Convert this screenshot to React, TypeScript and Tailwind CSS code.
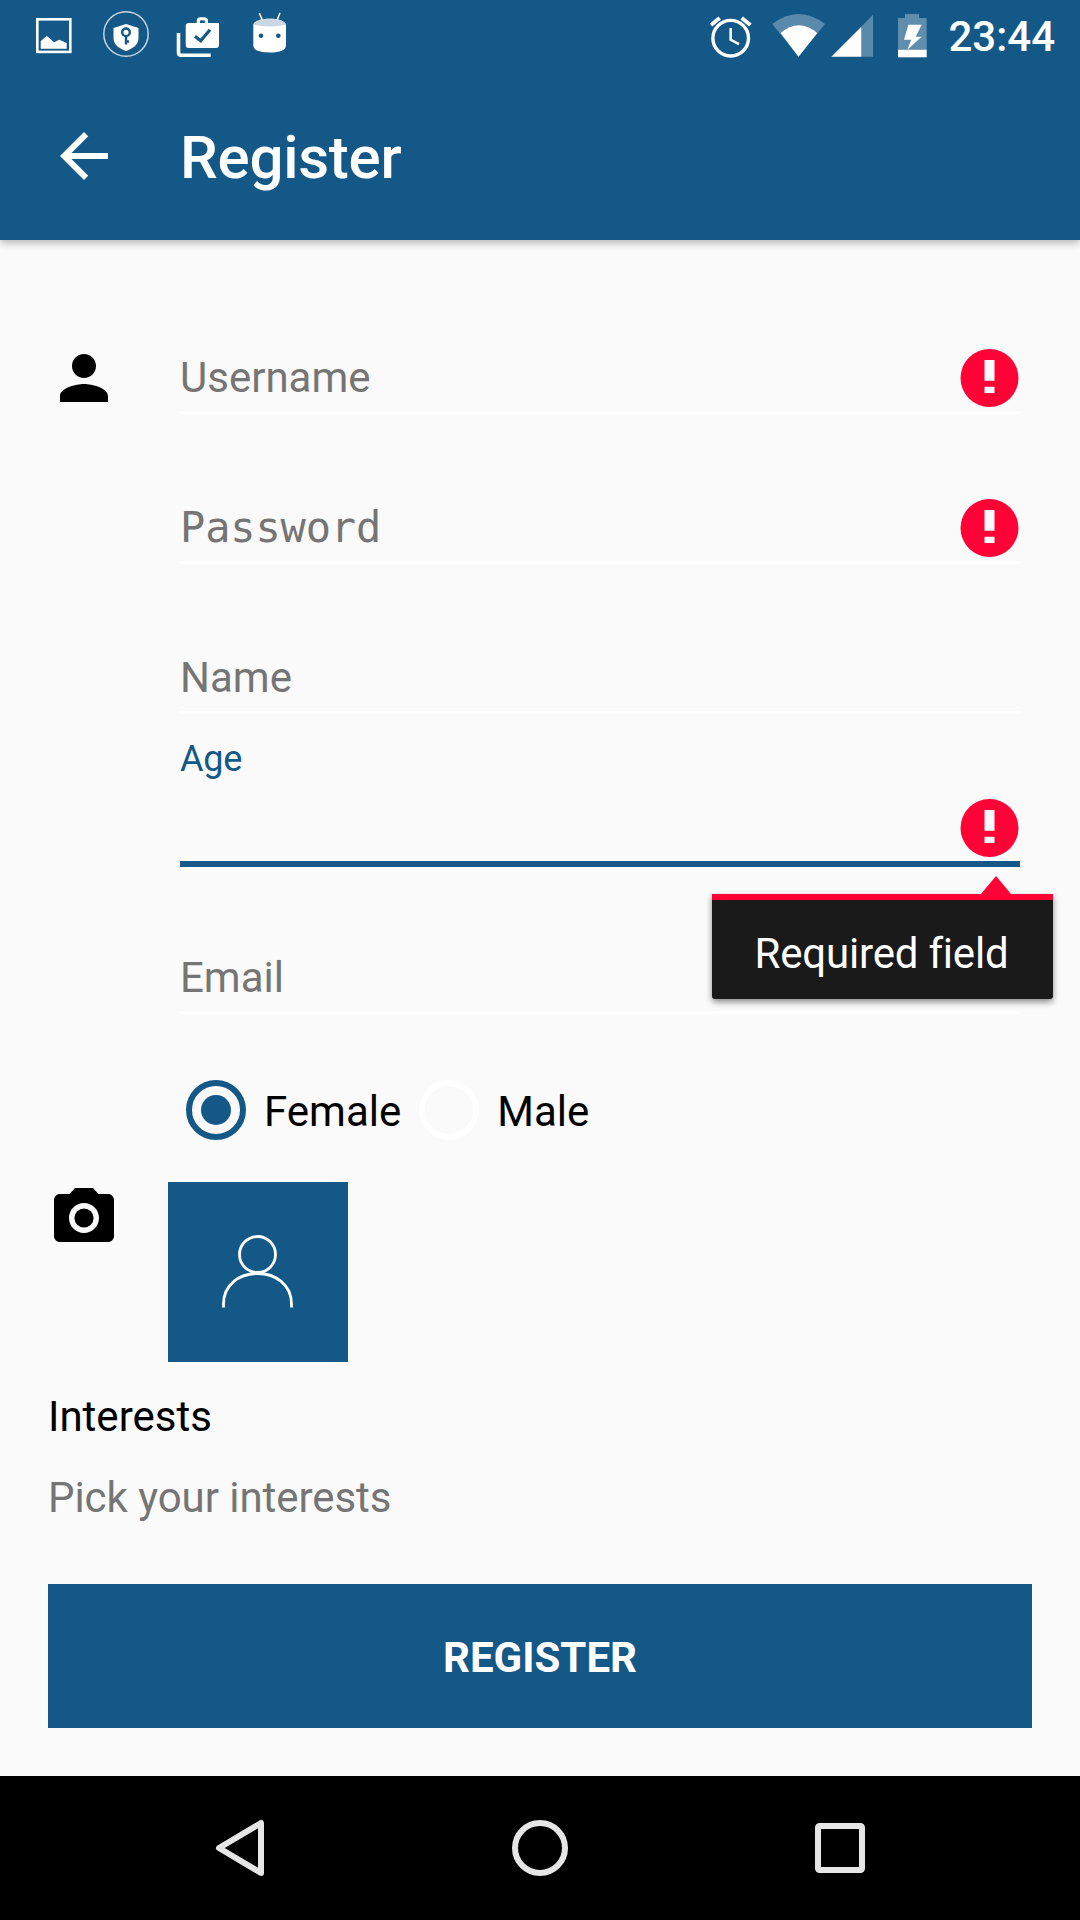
import React from "react";

const BLUE = "#145887";

function StatusLeft() {
  return (
    <svg width="260" height="72" viewBox="30 0 260 72" className="block">
      <rect x="37.3" y="19.3" width="33" height="32.6" fill="none" stroke="#fff" strokeWidth="2.6" />
      <path d="M40.7 48.7V41.3L46.7 35.7 54 42.3 59.3 39.7 66.7 43V48.7Z" fill="#fff" />
      <circle cx="126" cy="34" r="22.2" fill="none" stroke="#fff" strokeOpacity="0.75" strokeWidth="1.5" />
      <path d="M126 24 113.5 28V38C113.5 45 120 49 126 51 132 49 138.5 45 138.5 38V28Z" fill="#fff" />
      <circle cx="126" cy="32.3" r="3.8" fill="none" stroke={BLUE} strokeWidth="2.4" />
      <path d="M126 36V44.5M126 41.5H129" stroke={BLUE} strokeWidth="2.4" fill="none" />
      <path d="M178.5 33V52.5Q178.5 55.3 181.3 55.3H210.7" fill="none" stroke="#fff" strokeWidth="3.6" />
      <path d="M196.7 23V21Q196.7 17.3 200.4 17.3H204.3Q208 17.3 208 21V23H219V45Q219 48 216 48H188.7Q185.7 48 185.7 45V26Q185.7 23 188.7 23Z" fill="#fff" />
      <rect x="200" y="20.4" width="4.8" height="2.6" fill={BLUE} />
      <path d="M195 36.3 200.7 40.7 210 29.7" fill="none" stroke={BLUE} strokeWidth="3.2" />
      <path d="M259.3 13 262.7 21M280 13 276.7 21" stroke="#fff" strokeWidth="1.6" fill="none" />
      <path d="M253.3 25.5C253.3 20.5 262 18.7 269.7 18.7S286 20.5 286 25.5V45C286 50.5 280 52.5 269.7 52.5S253.3 50.5 253.3 45Z" fill="#fff" />
      <path d="M253.3 25.5C253.3 20.5 262 18.7 269.7 18.7S286 20.5 286 25.5C286 23.7 279 26.5 269.7 26.5S253.3 23.7 253.3 25.5Z" fill="#c9d8e3" />
      <circle cx="261" cy="35.7" r="2.3" fill={BLUE} />
      <circle cx="278.3" cy="35.7" r="2.3" fill={BLUE} />
    </svg>
  );
}

function StatusRight() {
  return (
    <svg width="225" height="72" viewBox="705 0 225 72" className="block">
      <circle cx="731.7" cy="38.2" r="17.8" fill="none" stroke="#fff" strokeWidth="3.4" />
      <path d="M712 25 720.7 18M751.4 25 742.7 18" stroke="#fff" strokeWidth="4" fill="none" />
      <path d="M731.7 28V39.8L740 44.2" stroke="#fff" strokeWidth="2.6" fill="none" />
      <path d="M799.5 56.7 773.3 24Q799.5 4 826 24Z" fill="#fff" fillOpacity="0.3" />
      <path d="M799.5 56.7 781.7 33Q799.5 17.6 818.3 33Z" fill="#fff" />
      <path d="M862.3 56.7V26.7L874 14.7V56.7Z" fill="#fff" fillOpacity="0.3" />
      <path d="M832.3 56.7 862.3 26.7V56.7Z" fill="#fff" />
      <path d="M906 18V14H920V18H927.7V49.7H899V18Z" fill="#fff" fillOpacity="0.32" />
      <rect x="899" y="49.7" width="28.7" height="7.6" fill="#fff" />
      <path d="M909.3 24.7H922.7L916.7 36.7H922.7L908.3 49.7 912.3 39.7H905Z" fill="#fff" />
    </svg>
  );
}

function ErrorIcon() {
  return (
    <svg width="72" height="72" viewBox="0 0 72 72" className="relative top-[3px] -mr-[6px] shrink-0">
      <path
        fill="#ff0336"
        fillRule="evenodd"
        d="M35.5 7a29 29 0 1 0 0 58a29 29 0 1 0 0-58ZM30.5 18H40.5V38.7H30.5ZM30.5 44.7H40.5V51H30.5Z"
      />
    </svg>
  );
}

function Field({
  label,
  mono,
  error,
  leading,
}: {
  label: string;
  mono?: boolean;
  error?: boolean;
  leading?: React.ReactNode;
}) {
  return (
    <div className="flex h-[150px] items-end pl-[48px] pr-[60px]">
      <div className="mr-[60px] w-[72px] shrink-0">{leading}</div>
      <div className="flex-1">
        <div className="flex h-[72px] items-center justify-between">
          <span
            className={
              mono
                ? "relative top-[3px] font-['DejaVu_Sans_Mono',monospace] text-[42px] leading-[72px] tracking-[-0.15px] text-[#757575]"
                : "relative top-[3px] text-[42px] leading-[72px] text-[#757575]"
            }
          >
            {label}
          </span>
          {error ? <ErrorIcon /> : null}
        </div>
        <div className="h-[3px] bg-white" />
      </div>
    </div>
  );
}

function AgeField() {
  return (
    <div className="flex h-[153px] items-end pl-[180px] pr-[60px]">
      <div className="relative flex-1">
        <div className="mb-[9px] text-[36px] leading-[42px] tracking-[-0.2px] text-[#145887]">Age</div>
        <div className="flex h-[72px] items-center justify-end">
          <ErrorIcon />
        </div>
        <div className="h-[6px] bg-[#145887]" />
        <div className="absolute right-[-33px] top-[156px] z-10 flex h-[105px] w-[341px] items-center justify-center rounded-b-[3px] border-t-[6px] border-[#ff0336] bg-[#1a1a1a] pt-[9px] shadow-[0_3px_6px_rgba(0,0,0,0.45)]">
          <svg width="30" height="18" viewBox="0 0 30 18" className="absolute left-[269px] top-[-24px]">
            <path d="M15 0 30 18H0Z" fill="#ff0336" />
          </svg>
          <span className="relative left-[-1px] text-[42px] leading-[50px] tracking-[-0.2px] text-white">Required field</span>
        </div>
      </div>
    </div>
  );
}

function Radio({ checked }: { checked?: boolean }) {
  return checked ? (
    <div className="flex h-[60px] w-[60px] items-center justify-center rounded-full border-[6px] border-[#145887]">
      <div className="h-[30px] w-[30px] rounded-full bg-[#145887]" />
    </div>
  ) : (
    <div className="h-[60px] w-[60px] rounded-full border-[6px] border-white" />
  );
}

export default function App() {
  return (
    <div className="flex h-[1920px] w-[1080px] flex-col overflow-hidden bg-[#fafafa] font-['Roboto',sans-serif]">
      <header className="relative z-20 h-[240px] shrink-0 bg-[#145887] text-white shadow-[0_3px_8px_rgba(0,0,0,0.28)]">
        <div className="flex h-[72px] items-center justify-between pl-[30px] pr-[25px]">
          <StatusLeft />
          <div className="flex items-center gap-[19px]">
            <StatusRight />
            <span className="relative top-[1px] text-[42px] font-medium leading-[50px]">23:44</span>
          </div>
        </div>
        <div className="flex h-[168px] items-center pl-[48px]">
          <svg width="72" height="72" viewBox="0 0 24 24" className="mr-[60px] shrink-0">
            <path fill="#fff" d="M20 11H7.83l5.59-5.59L12 4l-8 8 8 8 1.41-1.41L7.83 13H20v-2z" />
          </svg>
          <h1 className="relative top-[2px] text-[60px] font-medium leading-[72px] tracking-[-0.25px]">Register</h1>
        </div>
      </header>

      <main className="flex-1 pt-[24px]">
        <Field
          label="Username"
          error
          leading={
            <svg width="72" height="72" viewBox="0 0 24 24" className="block">
              <path d="M12 12c2.21 0 4-1.79 4-4s-1.79-4-4-4-4 1.79-4 4 1.79 4 4 4zm0 2c-2.67 0-8 1.34-8 4v2h16v-2c0-2.66-5.33-4-8-4z" />
            </svg>
          }
        />
        <Field label="Password" mono error />
        <Field label="Name" />
        <AgeField />
        <div className="flex h-[147px] items-end pl-[180px] pr-[60px]">
          <div className="flex-1">
            <div className="relative top-[3px] h-[72px] text-[42px] leading-[72px] text-[#757575]">Email</div>
            <div className="h-[3px] bg-white" />
          </div>
        </div>

        <div className="mt-[66px] flex items-center gap-[18px] pl-[186px] text-[42px] leading-[60px] text-black">
          <Radio checked />
          <span className="relative top-[2px]">Female</span>
          <Radio />
          <span className="relative top-[2px]">Male</span>
        </div>

        <div className="mt-[42px] flex items-start pl-[48px]">
          <svg width="72" height="72" viewBox="0 0 24 24" className="shrink-0">
            <circle cx="12" cy="12" r="3.2" />
            <path d="M9 2L7.17 4H4c-1.1 0-2 .9-2 2v12c0 1.1.9 2 2 2h16c1.1 0 2-.9 2-2V6c0-1.1-.9-2-2-2h-3.17L15 2H9zm3 15c-2.76 0-5-2.24-5-5s2.24-5 5-5 5 2.24 5 5-2.24 5-5 5z" />
          </svg>
          <div className="ml-[48px] flex h-[180px] w-[180px] items-center justify-center bg-[#145887]">
            <svg width="180" height="180" viewBox="168 1182 180 180" fill="none" stroke="#fff" strokeWidth="2.8">
              <circle cx="257.5" cy="1254.5" r="18" />
              <path d="M223.5 1307.5V1304C223.5 1285 239 1273.5 257.5 1273.5S291.5 1285 291.5 1304V1307.5" />
            </svg>
          </div>
        </div>

        <div className="mt-[31px] pl-[48px] text-[42px] leading-[48px] text-black">Interests</div>
        <div className="mt-[33px] pl-[48px] text-[42px] leading-[48px] tracking-[-0.05px] text-[#757575]">Pick your interests</div>

        <div className="mt-[62px] px-[48px]">
          <button className="flex h-[144px] w-full items-center justify-center bg-[#145887] pt-[2px] text-[42px] font-bold text-white">
            REGISTER
          </button>
        </div>
      </main>

      <nav className="flex h-[144px] shrink-0 items-center justify-center bg-black">
        <svg width="1080" height="144" viewBox="0 1776 1080 144" fill="none" stroke="#e6e6e6" strokeWidth="6" strokeLinejoin="round">
          <path d="M261 1823V1873L219 1848Z" />
          <circle cx="540" cy="1848" r="25" />
          <rect x="818" y="1826" width="44" height="44" rx="1.5" />
        </svg>
      </nav>
    </div>
  );
}
